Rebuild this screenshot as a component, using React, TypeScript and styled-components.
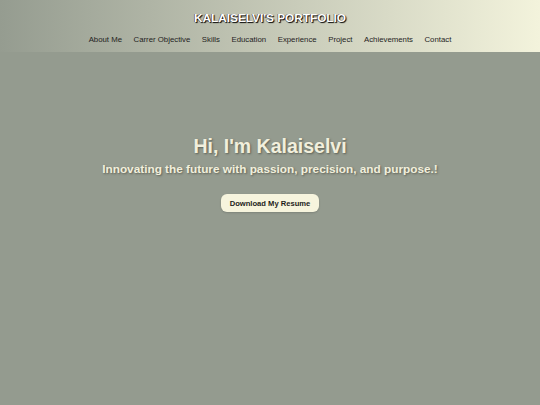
import React from 'react';
import styled, { createGlobalStyle } from 'styled-components';

const GlobalStyle = createGlobalStyle`
  html, body {
    margin: 0;
    padding: 0;
    background: #949b8f;
    font-family: 'Liberation Sans', Arial, sans-serif;
  }
`;

const Page = styled.div`
  min-height: 405px;
  display: flex;
  flex-direction: column;
`;

const Header = styled.header`
  height: 52px;
  box-sizing: border-box;
  padding-top: 11px;
  background: linear-gradient(to right, #959c90, #f3f3dc);
  display: flex;
  flex-direction: column;
  align-items: center;
`;

const Logo = styled.h1`
  margin: 0;
  font-size: 11.8px;
  font-weight: 700;
  line-height: 15px;
  color: #ffffff;
  text-shadow: 1px 1px 1px #000, -0.5px -0.5px 0 #333;
`;

const Nav = styled.nav`
  display: flex;
  gap: 11.5px;
  margin-top: 8px;
`;

const NavLink = styled.a`
  font-size: 7.8px;
  line-height: 11px;
  color: #1f231d;
  text-decoration: none;
`;

const Hero = styled.section`
  display: flex;
  flex-direction: column;
  align-items: center;
  padding-top: 82px;
`;

const Title = styled.h2`
  margin: 0;
  font-size: 19.5px;
  line-height: 25px;
  font-weight: 700;
  color: #f1efdc;
  text-shadow: 1px 1px 2px rgba(60, 60, 50, 0.6);
`;

const Subtitle = styled.p`
  margin: 3px 0 0;
  font-size: 11.8px;
  line-height: 15px;
  font-weight: 700;
  color: #f1efdc;
  text-shadow: 1px 1px 2px rgba(60, 60, 50, 0.6);
`;

const ResumeButton = styled.a`
  margin-top: 17px;
  display: inline-flex;
  align-items: center;
  justify-content: center;
  height: 18px;
  padding: 0 9px;
  border-radius: 6px;
  background: #f6f4dd;
  color: #1d1d1a;
  font-size: 7.6px;
  font-weight: 700;
  text-decoration: none;
  box-shadow: 0 1px 2px rgba(0, 0, 0, 0.15);
`;

const links = [
  'About Me',
  'Carrer Objective',
  'Skills',
  'Education',
  'Experience',
  'Project',
  'Achievements',
  'Contact',
];

export default function App() {
  return (
    <>
      <GlobalStyle />
      <Page>
        <Header>
          <Logo>KALAISELVI'S PORTFOLIO</Logo>
          <Nav>
            {links.map(l => (
              <NavLink key={l} href="#">
                {l}
              </NavLink>
            ))}
          </Nav>
        </Header>
        <Hero>
          <Title>Hi, I'm Kalaiselvi</Title>
          <Subtitle>Innovating the future with passion, precision, and purpose.!</Subtitle>
          <ResumeButton href="#">Download My Resume</ResumeButton>
        </Hero>
      </Page>
    </>
  );
}
